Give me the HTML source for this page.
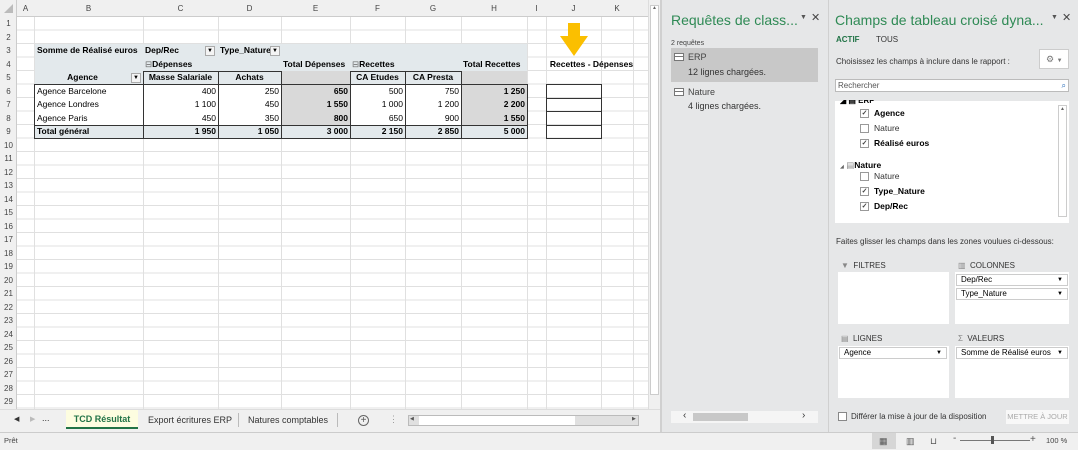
<!DOCTYPE html>
<html><head><meta charset="utf-8"><style>
*{margin:0;padding:0;box-sizing:border-box}
body{width:1078px;height:450px;overflow:hidden;background:#fff;font-family:"Liberation Sans",sans-serif;font-size:8.5px;color:#000;position:relative}
.a{position:absolute;white-space:nowrap}
.hdr{background:#f0f0f0;color:#444;text-align:center;font-size:8px}
.c{position:absolute;height:13.5px;line-height:13.5px;padding:0 2px;white-space:nowrap;overflow:hidden}
.r{text-align:right}.b{font-weight:bold}.ctr{text-align:center}
.pv{background:#e3e9ec}.gr{background:#d9d9d9}
.bx{position:absolute;border:1px solid #333}
.pn{background:#e6e7e8}
.cb{display:inline-block;width:9px;height:9px;border:1px solid #999;background:#fff;vertical-align:middle;margin-right:5px;font-size:7px;line-height:7px;text-align:center;color:#444}
.dd{position:absolute;background:#fff;border:1px solid #ccc;height:12px;font-size:8px;line-height:10px;padding-left:4px}
.dd:after{content:"▼";position:absolute;right:4px;font-size:6px}
</style></head><body>
<div class="a" style="left:0;top:17px;width:648px;height:392px;background:repeating-linear-gradient(to bottom,transparent 0,transparent 12.5px,#e0e0e0 12.5px,#e0e0e0 13.5px)"></div>
<div class="a" style="left:0;top:0;width:648px;height:409px;background:
linear-gradient(#e0e0e0,#e0e0e0) 34px 0/1px 100% no-repeat,
linear-gradient(#e0e0e0,#e0e0e0) 143px 0/1px 100% no-repeat,
linear-gradient(#e0e0e0,#e0e0e0) 218px 0/1px 100% no-repeat,
linear-gradient(#e0e0e0,#e0e0e0) 281px 0/1px 100% no-repeat,
linear-gradient(#e0e0e0,#e0e0e0) 350px 0/1px 100% no-repeat,
linear-gradient(#e0e0e0,#e0e0e0) 405px 0/1px 100% no-repeat,
linear-gradient(#e0e0e0,#e0e0e0) 461px 0/1px 100% no-repeat,
linear-gradient(#e0e0e0,#e0e0e0) 527px 0/1px 100% no-repeat,
linear-gradient(#e0e0e0,#e0e0e0) 546px 0/1px 100% no-repeat,
linear-gradient(#e0e0e0,#e0e0e0) 601px 0/1px 100% no-repeat,
linear-gradient(#e0e0e0,#e0e0e0) 633px 0/1px 100% no-repeat"></div>
<div class="a hdr" style="left:0;top:0;width:648px;height:17px;border-bottom:1px solid #ccc"></div>
<div class="a hdr" style="left:0;top:0;width:17px;height:409px;border-right:1px solid #ccc"></div>
<div class="a" style="left:4px;top:4px;width:0;height:0;border-left:9px solid transparent;border-bottom:9px solid #bbb"></div>
<div class="a hdr" style="left:17px;top:4px;width:17px">A</div>
<div class="a hdr" style="left:34px;top:4px;width:109px">B</div>
<div class="a hdr" style="left:143px;top:4px;width:75px">C</div>
<div class="a hdr" style="left:218px;top:4px;width:63px">D</div>
<div class="a hdr" style="left:281px;top:4px;width:69px">E</div>
<div class="a hdr" style="left:350px;top:4px;width:55px">F</div>
<div class="a hdr" style="left:405px;top:4px;width:56px">G</div>
<div class="a hdr" style="left:461px;top:4px;width:66px">H</div>
<div class="a hdr" style="left:527px;top:4px;width:19px">I</div>
<div class="a hdr" style="left:546px;top:4px;width:55px">J</div>
<div class="a hdr" style="left:601px;top:4px;width:32px">K</div>
<div class="a" style="left:0;top:17px;width:17px;font-size:8px;color:#444;text-align:center;line-height:13.5px">1<br>2<br>3<br>4<br>5<br>6<br>7<br>8<br>9<br>10<br>11<br>12<br>13<br>14<br>15<br>16<br>17<br>18<br>19<br>20<br>21<br>22<br>23<br>24<br>25<br>26<br>27<br>28<br>29</div>
<div class="a pv" style="left:35px;top:44px;width:492px;height:40px"></div>
<div class="a gr" style="left:281px;top:71px;width:69px;height:54px"></div>
<div class="a gr" style="left:461px;top:71px;width:66px;height:54px"></div>
<div class="a" style="left:143px;top:71px;width:138px;height:13.5px;background:#e3e9ec"></div>
<div class="a pv" style="left:35px;top:125px;width:492px;height:13.5px"></div>
<div class="a" style="left:35px;top:84.5px;width:246px;height:40px;background:#fff"></div>
<div class="a" style="left:350px;top:84.5px;width:111px;height:40px;background:#fff"></div>
<div class="a" style="left:350px;top:71px;width:111px;height:13.5px;background:#e3e9ec"></div>
<div class="bx" style="left:34px;top:84px;width:494px;height:55px"></div>
<div class="a" style="left:34px;top:125px;width:494px;height:1px;background:#333"></div>
<div class="bx" style="left:143px;top:71px;width:139px;height:68px"></div>
<div class="a" style="left:218px;top:71px;width:1px;height:68px;background:#333"></div>
<div class="bx" style="left:350px;top:71px;width:112px;height:68px"></div>
<div class="a" style="left:405px;top:71px;width:1px;height:68px;background:#333"></div>
<div class="a" style="left:281px;top:84px;width:1px;height:55px;background:#333"></div>
<div class="a" style="left:461px;top:84px;width:1px;height:55px;background:#333"></div>
<div class="c b" style="left:35px;top:44px">Somme de Réalisé euros</div>
<div class="c b" style="left:143px;top:44px">Dep/Rec</div>
<div class="a" style="left:205px;top:46px;width:10px;height:10px;border:1px solid #aaa;background:#f4f4f4;font-size:6px;text-align:center;line-height:8px">▼</div>
<div class="c b" style="left:218px;top:44px;width:52px">Type_Nature</div>
<div class="a" style="left:270px;top:46px;width:10px;height:10px;border:1px solid #aaa;background:#f4f4f4;font-size:6px;text-align:center;line-height:8px">▼</div>
<div class="c b" style="left:143px;top:57.5px"><span style="font-weight:normal;color:#666">⊟</span>Dépenses</div>
<div class="c b" style="left:281px;top:57.5px">Total Dépenses</div>
<div class="c b" style="left:350px;top:57.5px"><span style="font-weight:normal;color:#666">⊟</span>Recettes</div>
<div class="c b" style="left:461px;top:57.5px">Total Recettes</div>
<div class="c b ctr" style="left:546px;top:57.5px;width:91px">Recettes - Dépenses</div>
<div class="c b ctr" style="left:35px;top:71px;width:95px">Agence</div>
<div class="a" style="left:131px;top:73px;width:10px;height:10px;border:1px solid #aaa;background:#f4f4f4;font-size:6px;text-align:center;line-height:8px">▼</div>
<div class="c b ctr" style="left:143px;top:71px;width:75px">Masse Salariale</div>
<div class="c b ctr" style="left:218px;top:71px;width:63px">Achats</div>
<div class="c b ctr" style="left:350px;top:71px;width:55px">CA Etudes</div>
<div class="c b ctr" style="left:405px;top:71px;width:56px">CA Presta</div>
<div class="c" style="left:35px;top:84.5px">Agence Barcelone</div>
<div class="c" style="left:35px;top:98px">Agence Londres</div>
<div class="c" style="left:35px;top:111.5px">Agence Paris</div>
<div class="c b" style="left:35px;top:125px">Total général</div>
<div class="c r" style="left:143px;top:84.5px;width:75px">400</div>
<div class="c r" style="left:143px;top:98px;width:75px">1 100</div>
<div class="c r" style="left:143px;top:111.5px;width:75px">450</div>
<div class="c r b" style="left:143px;top:125px;width:75px">1 950</div>
<div class="c r" style="left:218px;top:84.5px;width:63px">250</div>
<div class="c r" style="left:218px;top:98px;width:63px">450</div>
<div class="c r" style="left:218px;top:111.5px;width:63px">350</div>
<div class="c r b" style="left:218px;top:125px;width:63px">1 050</div>
<div class="c r b" style="left:281px;top:84.5px;width:69px">650</div>
<div class="c r b" style="left:281px;top:98px;width:69px">1 550</div>
<div class="c r b" style="left:281px;top:111.5px;width:69px">800</div>
<div class="c r b" style="left:281px;top:125px;width:69px">3 000</div>
<div class="c r" style="left:350px;top:84.5px;width:55px">500</div>
<div class="c r" style="left:350px;top:98px;width:55px">1 000</div>
<div class="c r" style="left:350px;top:111.5px;width:55px">650</div>
<div class="c r b" style="left:350px;top:125px;width:55px">2 150</div>
<div class="c r" style="left:405px;top:84.5px;width:56px">750</div>
<div class="c r" style="left:405px;top:98px;width:56px">1 200</div>
<div class="c r" style="left:405px;top:111.5px;width:56px">900</div>
<div class="c r b" style="left:405px;top:125px;width:56px">2 850</div>
<div class="c r b" style="left:461px;top:84.5px;width:66px">1 250</div>
<div class="c r b" style="left:461px;top:98px;width:66px">2 200</div>
<div class="c r b" style="left:461px;top:111.5px;width:66px">1 550</div>
<div class="c r b" style="left:461px;top:125px;width:66px">5 000</div>
<div class="bx" style="left:546px;top:84px;width:56px;height:14.5px"></div>
<div class="bx" style="left:546px;top:97.5px;width:56px;height:14.5px"></div>
<div class="bx" style="left:546px;top:111px;width:56px;height:14.5px"></div>
<div class="bx" style="left:546px;top:124.5px;width:56px;height:14.5px"></div>
<svg class="a" style="left:558px;top:22px" width="34" height="36"><path d="M10 1H22V14H30L16 34L2 14H10Z" fill="#fbbf00"/></svg>
<div class="a" style="left:648px;top:0;width:12px;height:409px;background:#f0f0f0;border-left:1px solid #ddd"></div>
<div class="a" style="left:650px;top:5px;width:9px;height:390px;background:#fff;border:1px solid #ccc"></div>
<div class="a" style="left:650px;top:5px;width:9px;height:9px;font-size:5px;text-align:center;color:#666">▲</div>
<div class="a" style="left:0;top:409px;width:660px;height:23px;background:#f0f0f0;border-top:1px solid #ddd"></div>
<div class="a" style="left:14px;top:415px;font-size:7px;color:#333">◀</div>
<div class="a" style="left:30px;top:415px;font-size:7px;color:#bbb">▶</div>
<div class="a" style="left:42px;top:413px;font-size:9px;color:#333">...</div>
<div class="a" style="left:66px;top:410px;width:72px;height:19px;background:#fdfde0;border-bottom:2px solid #217346;color:#217346;font-weight:bold;font-size:9px;text-align:center;line-height:18px">TCD Résultat</div>
<div class="a" style="left:148px;top:415px;font-size:9px;color:#333">Export écritures ERP</div>
<div class="a" style="left:238px;top:413px;width:1px;height:14px;background:#bbb"></div>
<div class="a" style="left:248px;top:415px;font-size:9px;color:#333">Natures comptables</div>
<div class="a" style="left:337px;top:413px;width:1px;height:14px;background:#bbb"></div>
<div class="a" style="left:358px;top:415px;width:11px;height:11px;border:1px solid #666;border-radius:50%;font-size:10px;line-height:9px;text-align:center;color:#555">+</div>
<div class="a" style="left:408px;top:415px;width:231px;height:11px;background:#e0e0e0;border:1px solid #bbb"></div>
<div class="a" style="left:419px;top:416px;width:156px;height:9px;background:#fff"></div>
<div class="a" style="left:410px;top:416px;font-size:5px;color:#555">◀</div>
<div class="a" style="left:632px;top:416px;font-size:5px;color:#555">▶</div>
<div class="a" style="left:389px;top:414px;color:#999;font-size:9px">⋮</div>
<div class="a" style="left:0;top:432px;width:1078px;height:18px;background:#f0f0f0;border-top:1px solid #ccc"></div>
<div class="a" style="left:4px;top:436px;font-size:7.5px;color:#444">Prêt</div>
<div class="a" style="left:872px;top:433px;width:24px;height:16px;background:#d6d6d6"></div>
<div class="a" style="left:879px;top:436px;font-size:9px;color:#555">▦</div>
<div class="a" style="left:906px;top:436px;font-size:9px;color:#555">▥</div>
<div class="a" style="left:930px;top:436px;font-size:9px;color:#555">⊔</div>
<div class="a" style="left:953px;top:433px;font-size:10px;color:#555">-</div>
<div class="a" style="left:960px;top:440px;width:70px;height:1px;background:#777"></div>
<div class="a" style="left:991px;top:436px;width:3px;height:8px;background:#555"></div>
<div class="a" style="left:1030px;top:434px;font-size:10px;color:#555">+</div>
<div class="a" style="left:1046px;top:436px;font-size:7.5px;color:#444">100 %</div>
<div class="a pn" style="left:660px;top:0;width:168px;height:432px;border-left:2px solid #d0d0d0"></div>
<div class="a" style="left:671px;top:12px;font-size:14px;color:#2f8a55">Requêtes de class...</div>
<div class="a" style="left:800px;top:14px;font-size:7px;color:#555">▼</div>
<div class="a" style="left:811px;top:11px;font-size:11px;color:#444">✕</div>
<div class="a" style="left:671px;top:40px;font-size:7px;color:#444">2 requêtes</div>
<div class="a" style="left:671px;top:48px;width:147px;height:34px;background:#c8c8c8"></div>
<div class="a" style="left:674px;top:53px;width:10px;height:8px;border:1px solid #777;background:linear-gradient(#777,#777) 0 2px/100% 1px no-repeat,#fff"></div>
<div class="a" style="left:688px;top:52px;font-size:9px;color:#444">ERP</div>
<div class="a" style="left:688px;top:67px;font-size:9px;color:#333">12 lignes chargées.</div>
<div class="a" style="left:674px;top:88px;width:10px;height:8px;border:1px solid #777;background:linear-gradient(#777,#777) 0 2px/100% 1px no-repeat,#fff"></div>
<div class="a" style="left:688px;top:87px;font-size:9px;color:#444">Nature</div>
<div class="a" style="left:688px;top:101px;font-size:9px;color:#333">4 lignes chargées.</div>
<div class="a" style="left:671px;top:411px;width:147px;height:12px;background:#f5f5f5"></div>
<div class="a" style="left:693px;top:413px;width:55px;height:8px;background:#c8c8c8"></div>
<div class="a" style="left:683px;top:410px;font-size:10px;color:#333">‹</div>
<div class="a" style="left:802px;top:410px;font-size:10px;color:#333">›</div>
<div class="a pn" style="left:828px;top:0;width:250px;height:432px;border-left:1px solid #d0d0d0"></div>
<div class="a" style="left:835px;top:12px;font-size:14px;color:#2f8a55">Champs de tableau croisé dyna...</div>
<div class="a" style="left:1051px;top:14px;font-size:7px;color:#555">▼</div>
<div class="a" style="left:1062px;top:11px;font-size:11px;color:#444">✕</div>
<div class="a" style="left:836px;top:35px;font-size:8px;font-weight:bold;color:#217346">ACTIF</div>
<div class="a" style="left:876px;top:35px;font-size:8px;color:#333">TOUS</div>
<div class="a" style="left:836px;top:57px;font-size:8px;color:#333">Choisissez les champs à inclure dans le rapport :</div>
<div class="a" style="left:1039px;top:49px;width:30px;height:20px;background:#fff;border:1px solid #ccc;font-size:9px;color:#777;line-height:18px;padding-left:6px">⚙ <span style="font-size:6px">▼</span></div>
<div class="a" style="left:835px;top:79px;width:234px;height:13px;background:#fff;border:1px solid #bbb;font-size:8px;line-height:11px;color:#555;padding-left:2px">Rechercher<span style="position:absolute;right:2px;color:#2a6ebb">⌕</span></div>
<div class="a" style="left:835px;top:101px;width:234px;height:122px;background:#fff"></div>
<div class="a" style="left:1058px;top:105px;width:9px;height:112px;border:1px solid #ccc;font-size:5px;color:#666;text-align:center">▲</div>
<div class="a" style="left:840px;top:100px;font-size:8px;font-weight:bold;height:5px;overflow:hidden;line-height:2px">◢ ▤ ERP</div>
<div class="a" style="left:860px;top:108px;font-size:8.5px;font-weight:bold"><span class="cb">✓</span>Agence</div>
<div class="a" style="left:860px;top:123px;font-size:8.5px;color:#333"><span class="cb"></span>Nature</div>
<div class="a" style="left:860px;top:138px;font-size:8.5px;font-weight:bold"><span class="cb">✓</span>Réalisé euros</div>
<div class="a" style="left:840px;top:160px;font-size:8.5px;font-weight:bold"><span style="font-size:5px;font-weight:normal;color:#666">◢</span> <span style="color:#888;font-weight:normal">▤</span>Nature</div>
<div class="a" style="left:860px;top:171px;font-size:8.5px;color:#333"><span class="cb"></span>Nature</div>
<div class="a" style="left:860px;top:186px;font-size:8.5px;font-weight:bold"><span class="cb">✓</span>Type_Nature</div>
<div class="a" style="left:860px;top:201px;font-size:8.5px;font-weight:bold"><span class="cb">✓</span>Dep/Rec</div>
<div class="a" style="left:836px;top:237px;font-size:8px;color:#333">Faites glisser les champs dans les zones voulues ci-dessous:</div>
<div class="a" style="left:841px;top:261px;font-size:8px;color:#333"><span style="color:#888">▼</span>&nbsp; FILTRES</div>
<div class="a" style="left:958px;top:261px;font-size:8px;color:#333"><span style="color:#888">▥</span>&nbsp; COLONNES</div>
<div class="a" style="left:838px;top:272px;width:111px;height:52px;background:#fff"></div>
<div class="a" style="left:955px;top:272px;width:114px;height:52px;background:#fff"></div>
<div class="dd" style="left:956px;top:274px;width:112px">Dep/Rec</div>
<div class="dd" style="left:956px;top:288px;width:112px">Type_Nature</div>
<div class="a" style="left:841px;top:334px;font-size:8px;color:#333"><span style="color:#888">▤</span>&nbsp; LIGNES</div>
<div class="a" style="left:958px;top:334px;font-size:8px;color:#333"><span style="color:#888">Σ</span>&nbsp; VALEURS</div>
<div class="a" style="left:838px;top:346px;width:111px;height:52px;background:#fff"></div>
<div class="a" style="left:955px;top:346px;width:114px;height:52px;background:#fff"></div>
<div class="dd" style="left:839px;top:347px;width:108px">Agence</div>
<div class="dd" style="left:956px;top:347px;width:112px">Somme de Réalisé euros</div>
<div class="a" style="left:838px;top:412px;width:9px;height:9px;border:1px solid #888;background:#fff"></div>
<div class="a" style="left:851px;top:412px;font-size:8px;color:#333">Différer la mise à jour de la disposition</div>
<div class="a" style="left:1006px;top:410px;width:63px;height:14px;background:#f8f8f8;font-size:7.5px;color:#aaa;text-align:center;line-height:14px">METTRE À JOUR</div>
</body></html>
